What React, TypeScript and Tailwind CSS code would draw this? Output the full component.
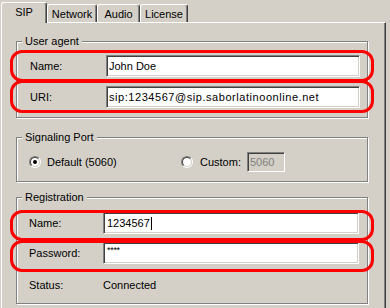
import * as React from 'react';

interface EditProps {
  width: string;
  height?: string;
  disabled?: boolean;
  className?: string;
  children?: React.ReactNode;
}

const Edit: React.FC<EditProps> = ({ width, height = 'h-[22px]', disabled, className = '', children }) => (
  <div
    className={`${width} ${height} flex items-center pl-[2px] border border-t-[#808080] border-l-[#808080] border-b-white border-r-white shadow-[inset_1px_1px_0_#404040,inset_-1px_-1px_0_#d4d0c8] whitespace-nowrap overflow-hidden ${
      disabled ? 'bg-[#d4d0c8] text-[#808080]' : 'bg-white text-black'
    } ${className}`}
  >
    {children}
  </div>
);

const Radio: React.FC<{ checked?: boolean }> = ({ checked }) => (
  <div className="w-[12px] h-[12px] rounded-full border border-t-[#808080] border-l-[#808080] border-b-white border-r-white">
    <div className="w-full h-full rounded-full border border-t-[#404040] border-l-[#404040] border-b-[#d4d0c8] border-r-[#d4d0c8] bg-white flex items-center justify-center">
      {checked && <div className="w-[4px] h-[4px] rounded-full bg-black" />}
    </div>
  </div>
);

const GroupBox: React.FC<{ title: string; className?: string; children: React.ReactNode }> = ({ title, className = '', children }) => (
  <div className={`relative w-[352px] border border-[#808080] shadow-[inset_1px_1px_0_#fff,1px_1px_0_#fff] ${className}`}>
    <span className="absolute left-[5px] top-[-8px] px-[3px] leading-[14px] bg-[#d4d0c8]">{title}</span>
    {children}
  </div>
);

const Tab: React.FC<{ label: string; width: string; active?: boolean }> = ({ label, width, active }) => (
  <div
    className={`${width} flex items-center justify-center rounded-t-[3px] border-l border-t border-r border-l-white border-t-white border-r-[#404040] shadow-[inset_-1px_0_0_#808080] bg-[#d4d0c8] ${
      active ? 'h-[21px] mb-[-1px] relative z-10 pb-[1px]' : 'h-[18px] pt-[2px]'
    }`}
  >
    {label}
  </div>
);

const Highlight: React.FC<{ top: string; height: string }> = ({ top, height }) => (
  <div className={`absolute left-[10px] w-[364px] ${top} ${height} border-[3px] border-[#ff0000] rounded-[12px] pointer-events-none z-20`} />
);

export default function App() {
  return (
    <div className="relative w-[390px] h-[308px] overflow-hidden bg-[#d4d0c8] text-[11px] text-black font-['Liberation_Sans',Arial,sans-serif]">
      {/* Tabs */}
      <div className="flex items-end h-[22px] pl-[1px]">
        <Tab label="SIP" width="w-[46px]" active />
        <Tab label="Network" width="w-[50px]" />
        <Tab label="Audio" width="w-[43px]" />
        <Tab label="License" width="w-[48px]" />
      </div>

      {/* Tab page */}
      <div className="ml-[1px] w-[385px] h-[300px] border-l border-t border-r border-l-white border-t-white border-r-[#404040] shadow-[inset_-1px_0_0_#808080] pl-[14px] pt-[18px]">
        {/* User agent */}
        <GroupBox title="User agent" className="pt-[13px] pb-[9px]">
          <div className="flex items-center h-[22px] pl-[13px]">
            <span className="w-[76px]">Name:</span>
            <Edit width="w-[254px]">John Doe</Edit>
          </div>
          <div className="flex items-center h-[22px] pl-[13px] mt-[9px]">
            <span className="w-[76px]">URI:</span>
            <Edit width="w-[254px]" className="tracking-[0.55px]">sip:1234567@sip.saborlatinoonline.net</Edit>
          </div>
        </GroupBox>

        {/* Signaling port */}
        <GroupBox title="Signaling Port" className="mt-[19px] pt-[14px] pb-[9px]">
          <div className="flex items-center h-[20px] pl-[12px]">
            <Radio checked />
            <span className="ml-[6px] w-[134px]">Default (5060)</span>
            <Radio />
            <span className="ml-[7px] w-[47px]">Custom:</span>
            <Edit width="w-[38px]" height="h-[20px]" disabled>5060</Edit>
          </div>
        </GroupBox>

        {/* Registration */}
        <GroupBox title="Registration" className="mt-[15px] pt-[14px] pb-[7px]">
          <div className="flex items-center h-[22px] pl-[12px]">
            <span className="w-[74px]">Name:</span>
            <Edit width="w-[256px]" className="pl-[3px]">
              1234567
              <span className="inline-block w-[1px] h-[13px] bg-black ml-[1px]" />
            </Edit>
          </div>
          <div className="flex items-center h-[22px] pl-[12px] mt-[8px]">
            <span className="w-[74px]">Password:</span>
            <Edit width="w-[256px]" className="pl-[3px] items-start pt-[3px] text-[9px] leading-[9px] tracking-[-0.3px]">****</Edit>
          </div>
          <div className="flex items-center h-[22px] pl-[12px] mt-[10px]">
            <span className="w-[74px]">Status:</span>
            <span>Connected</span>
          </div>
        </GroupBox>
      </div>

      {/* Red annotation outlines */}
      <Highlight top="top-[50px]" height="h-[32px]" />
      <Highlight top="top-[80px]" height="h-[33px]" />
      <Highlight top="top-[210px]" height="h-[31px]" />
      <Highlight top="top-[240px]" height="h-[32px]" />
    </div>
  );
}
